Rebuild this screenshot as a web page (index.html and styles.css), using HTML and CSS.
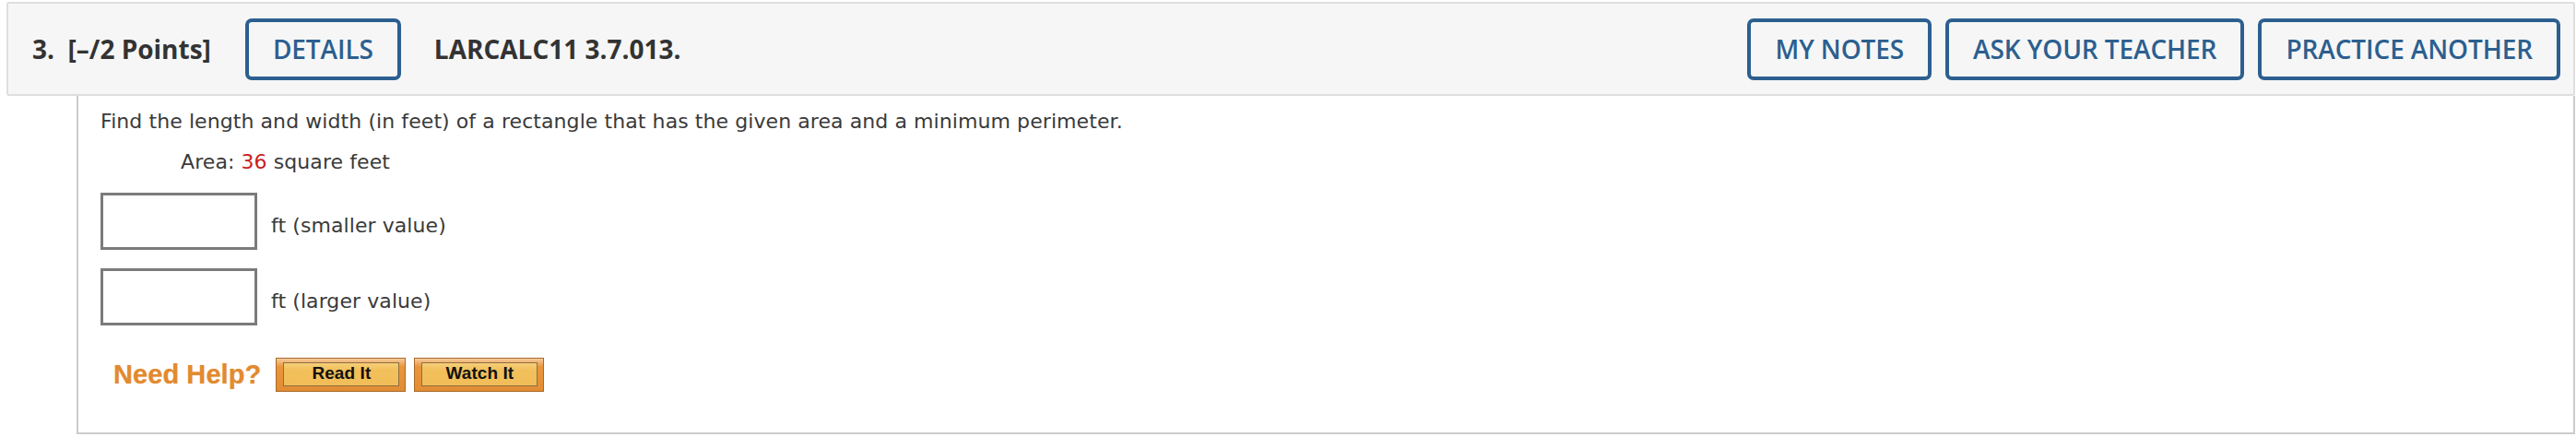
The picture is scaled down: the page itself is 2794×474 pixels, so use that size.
FILE: index.html
```html
<!DOCTYPE html>
<html lang="en">
<head>
<meta charset="utf-8">
<title>Question 3</title>
<link rel="stylesheet" href="styles.css">
</head>
<body>
<div class="question">
  <div class="qhead">
    <span class="qlabel">3.&nbsp; [–/2 Points]</span>
    <button class="hbtn">DETAILS</button>
    <span class="qlabel qcode">LARCALC11 3.7.013.</span>
    <div class="hright">
      <button class="hbtn">MY NOTES</button>
      <button class="hbtn">ASK YOUR TEACHER</button>
      <button class="hbtn">PRACTICE ANOTHER</button>
    </div>
  </div>
  <div class="qbody">
    <p class="prompt">Find the length and width (in feet) of a rectangle that has the given area and a minimum perimeter.</p>
    <p class="given">Area: <span class="red">36</span> square feet</p>
    <div class="answer">
      <input class="ansbox" type="text">
      <span class="unit">ft (smaller value)</span>
    </div>
    <div class="answer second">
      <input class="ansbox" type="text">
      <span class="unit">ft (larger value)</span>
    </div>
    <div class="help">
      <span class="needhelp">Need Help?</span>
      <span class="hlp"><span class="hlp-in">Read It</span></span>
      <span class="hlp"><span class="hlp-in">Watch It</span></span>
    </div>
  </div>
</div>
</body>
</html>
```
FILE: styles.css
```css
html, body {
  margin: 0;
  padding: 0;
  background: #ffffff;
}

.question {
  padding: 2px 1px 0 7px;
}

.qhead {
  display: flex;
  align-items: center;
  height: 98px;
  border: 2px solid #dedede;
  border-radius: 3px;
  background: #f6f6f6;
  padding: 0 14px 0 26px;
  font-family: "Open Sans", "DejaVu Sans", sans-serif;
}

.qlabel {
  font-weight: 700;
  font-size: 28px;
  color: #333333;
  white-space: pre;
}

.qcode {
  margin-left: 36px;
}

.hbtn {
  box-sizing: border-box;
  height: 67px;
  padding: 0 26px;
  border: 4px solid #2c5f8f;
  border-radius: 7px;
  background: #f6f6f6;
  color: #2c5f8f;
  font-family: "Open Sans", "DejaVu Sans", sans-serif;
  font-weight: 600;
  font-size: 28px;
  letter-spacing: -0.1px;
  line-height: 1;
  margin-left: 37px;
}

.hright {
  margin-left: auto;
  display: flex;
  gap: 15px;
}

.hright .hbtn {
  margin-left: 0;
}

.qbody {
  margin-left: 76px;
  border: 2px solid #cccccc;
  border-top: none;
  padding: 15px 24px 44px 24px;
  font-family: "DejaVu Sans", Verdana, sans-serif;
  font-size: 22px;
  line-height: 1.2;
  letter-spacing: 0.08px;
  color: #3a3a3a;
}

.prompt {
  margin: 0;
}

.given {
  margin: 18px 0 0 87px;
}

.red {
  color: #c9211e;
}

.answer {
  display: flex;
  align-items: flex-end;
  gap: 15px;
  margin-top: 19px;
}

.answer.second {
  margin-top: 20px;
}

.ansbox {
  box-sizing: border-box;
  width: 170px;
  height: 62px;
  margin: 0;
  border: 3px solid #7b7b7b;
  background: #ffffff;
}

.unit {
  margin-bottom: 12px;
}

.help {
  display: flex;
  align-items: center;
  margin: 35px 0 0 14px;
}

.needhelp {
  font-family: "Liberation Sans", Arial, sans-serif;
  font-weight: 700;
  font-size: 29px;
  color: #e28a30;
  margin-right: 16px;
  text-shadow: 0 0 1px rgba(226, 138, 48, 0.6);
}

.hlp {
  box-sizing: border-box;
  display: flex;
  width: 141px;
  height: 37px;
  padding: 4px 6px 5px 7px;
  margin-right: 9px;
  border: 1px solid #a86a2c;
  background: linear-gradient(#f6cc9c, #e9963d 25%, #e28c33);
}

.hlp-in {
  flex: 1;
  display: flex;
  align-items: center;
  justify-content: center;
  border: 1px solid #8e6e44;
  background: linear-gradient(#f6cf78, #f2c05c 30%, #f1bd58);
  font-family: "Liberation Sans", Arial, sans-serif;
  font-weight: 700;
  font-size: 19px;
  color: #111111;
}
```
